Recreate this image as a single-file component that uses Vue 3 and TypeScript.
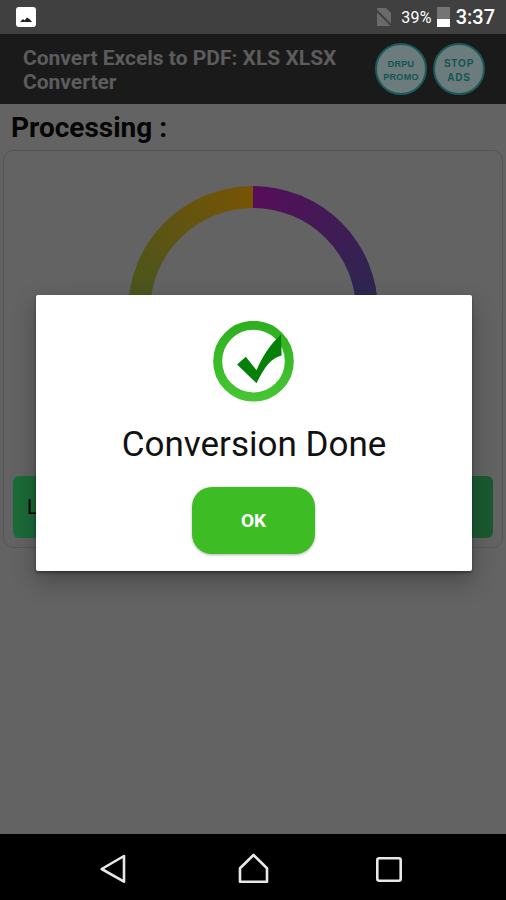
<script setup lang="ts">
const promoButtons = [
  { id: 'promo', lines: ['DRPU', 'PROMO'], large: false },
  { id: 'ads', lines: ['STOP', 'ADS'], large: true },
]
</script>

<template>
  <div class="screen">
    <div class="status-bar">
      <svg class="status-image" width="20" height="20" viewBox="0 0 20 20">
        <rect width="20" height="20" rx="3" fill="#fff" />
        <path d="M4 15 L7 12 L8.5 13.5 L11 10.5 L14 12.5 L16 15 Z" fill="#222" />
      </svg>
      <svg class="status-sim" width="19" height="20" viewBox="0 0 19 20">
        <path d="M3 1 H12 L17 6 V19 H3 Z" fill="#6a6a6a" />
        <path d="M0 1 L18 19" stroke="#404040" stroke-width="2" />
      </svg>
      <span class="battery-text">39%</span>
      <div class="battery"><div class="battery-level"></div></div>
      <span class="clock">3:37</span>
    </div>

    <div class="toolbar">
      <div class="toolbar-title">Convert Excels to PDF: XLS XLSX Converter</div>
      <div class="toolbar-actions">
        <div
          v-for="btn in promoButtons"
          :key="btn.id"
          class="round-btn"
          :class="{ large: btn.large }"
        >
          <span v-for="line in btn.lines" :key="line">{{ line }}</span>
        </div>
      </div>
    </div>

    <div class="content">
      <div class="heading">Processing :</div>
      <div class="card">
        <div class="ring"><div class="ring-hole"></div></div>
        <div class="progress-row">L</div>
      </div>
    </div>

    <div class="nav-bar">
      <svg width="36" height="36" viewBox="0 0 36 36">
        <path d="M6.7 20 L29 7 V32.7 Z" class="nav-icon" />
      </svg>
      <svg width="36" height="36" viewBox="0 0 36 36">
        <path d="M20.5 6 L34 19.3 V32.7 H7 V19.3 Z" class="nav-icon" />
      </svg>
      <svg width="36" height="36" viewBox="0 0 36 36">
        <rect x="6.3" y="9.3" width="23.4" height="22.4" rx="2" class="nav-icon" />
      </svg>
    </div>

    <div class="dialog-layer">
      <div class="dialog">
        <svg class="done-icon" width="81" height="81" viewBox="100 65 242 242">
          <defs>
            <linearGradient id="ringGreen" x1="0" y1="0" x2="0" y2="1">
              <stop offset="0" stop-color="#2fb01e" />
              <stop offset="1" stop-color="#45c533" />
            </linearGradient>
          </defs>
          <circle cx="221" cy="185" r="107" fill="#fff" stroke="url(#ringGreen)" stroke-width="27" />
          <path
            d="M172 195 L198 172 L230 212 C245 175 270 135 303 105 L305 168 C275 175 255 200 230 251 Z"
            fill="#07800a"
          />
        </svg>
        <div class="dialog-text">Conversion Done</div>
        <button class="ok-btn">OK</button>
      </div>
    </div>
  </div>
</template>

<style scoped>
.screen {
  position: relative;
  display: flex;
  flex-direction: column;
  height: 900px;
  background: #636363;
  font-family: Roboto, "Liberation Sans", sans-serif;
  overflow: hidden;
}
.status-bar {
  display: flex;
  align-items: center;
  height: 34px;
  padding: 0 11px 0 16px;
  background: #404040;
  color: #fff;
}
.status-image {
  margin-right: auto;
}
.status-sim {
  margin-right: 8px;
}
.battery-text {
  font-size: 16px;
  margin-right: 5px;
  letter-spacing: 0.2px;
}
.battery {
  display: flex;
  flex-direction: column;
  justify-content: flex-end;
  width: 13px;
  height: 20px;
  margin-right: 6px;
  background: #747474;
}
.battery-level {
  height: 8px;
  background: #fff;
}
.clock {
  font-size: 20px;
  font-weight: 500;
}
.toolbar {
  display: flex;
  align-items: center;
  justify-content: space-between;
  height: 70px;
  padding: 0 21px 0 23px;
  background: #1a1a1a;
}
.toolbar-title {
  width: 330px;
  padding-top: 2px;
  font-size: 21px;
  font-weight: 700;
  line-height: 24px;
  color: #5c5c5c;
}
.toolbar-actions {
  display: flex;
  gap: 6px;
}
.round-btn {
  display: flex;
  flex-direction: column;
  align-items: center;
  justify-content: center;
  width: 52px;
  height: 52px;
  box-sizing: border-box;
  padding-top: 3px;
  border: 2px solid #1b5a5b;
  border-radius: 50%;
  background: #6c7c7c;
  color: #145354;
  font-family: "Liberation Sans", sans-serif;
  font-size: 9px;
  font-weight: 700;
  line-height: 13px;
  letter-spacing: 0.3px;
}
.round-btn.large {
  font-size: 10px;
  line-height: 14px;
  letter-spacing: 0.8px;
}
.content {
  flex: 1;
  padding: 8px 3px 0;
}
.heading {
  padding-left: 8px;
  font-size: 28px;
  font-weight: 700;
  line-height: 32px;
  color: #060606;
}
.card {
  display: flex;
  flex-direction: column;
  align-items: center;
  margin-top: 6px;
  height: 398px;
  box-sizing: border-box;
  padding: 35px 9px 0;
  border: 1px solid #565656;
  border-radius: 10px;
}
.ring {
  display: flex;
  align-items: center;
  justify-content: center;
  width: 250px;
  height: 250px;
  border-radius: 50%;
  background: conic-gradient(#560e5a, #29294f 25%, #1e3636 50%, #465520 75%, #775404);
}
.ring-hole {
  width: 206px;
  height: 206px;
  border-radius: 50%;
  background: #636363;
}
.progress-row {
  align-self: stretch;
  display: flex;
  align-items: center;
  height: 62px;
  margin-top: 40px;
  padding-left: 14px;
  border-radius: 6px;
  background: linear-gradient(90deg, #1b6b38, #1a5a30);
  font-size: 20px;
  color: #000;
}
.nav-bar {
  display: flex;
  align-items: center;
  justify-content: space-between;
  height: 66px;
  padding: 0 99px 0 95px;
  background: #000;
}
.nav-icon {
  fill: none;
  stroke: #e8e8e8;
  stroke-width: 2.6;
  stroke-linejoin: round;
}
.dialog-layer {
  position: absolute;
  top: 34px;
  left: 0;
  right: 0;
  bottom: 66px;
  display: flex;
  align-items: center;
  justify-content: center;
  padding: 0 0 2px 2px;
  box-sizing: border-box;
}
.dialog {
  display: flex;
  flex-direction: column;
  align-items: center;
  width: 436px;
  height: 276px;
  box-sizing: border-box;
  padding-top: 26px;
  border-radius: 2px;
  background: #fff;
  box-shadow: 0 2px 3px rgba(0, 0, 0, 0.35), 0 10px 24px rgba(0, 0, 0, 0.28);
}
.done-icon {
  margin-left: -2px;
}
.dialog-text {
  margin-top: 24px;
  font-size: 35px;
  line-height: 38px;
  color: #111;
}
.ok-btn {
  width: 123px;
  height: 67px;
  margin-top: 23px;
  margin-left: -1px;
  border: none;
  border-radius: 20px;
  background: #3dbc24;
  color: #fff;
  font-family: Roboto, "Liberation Sans", sans-serif;
  font-size: 19px;
  font-weight: 700;
  box-shadow: 0 1px 3px rgba(0, 0, 0, 0.3);
}
</style>
